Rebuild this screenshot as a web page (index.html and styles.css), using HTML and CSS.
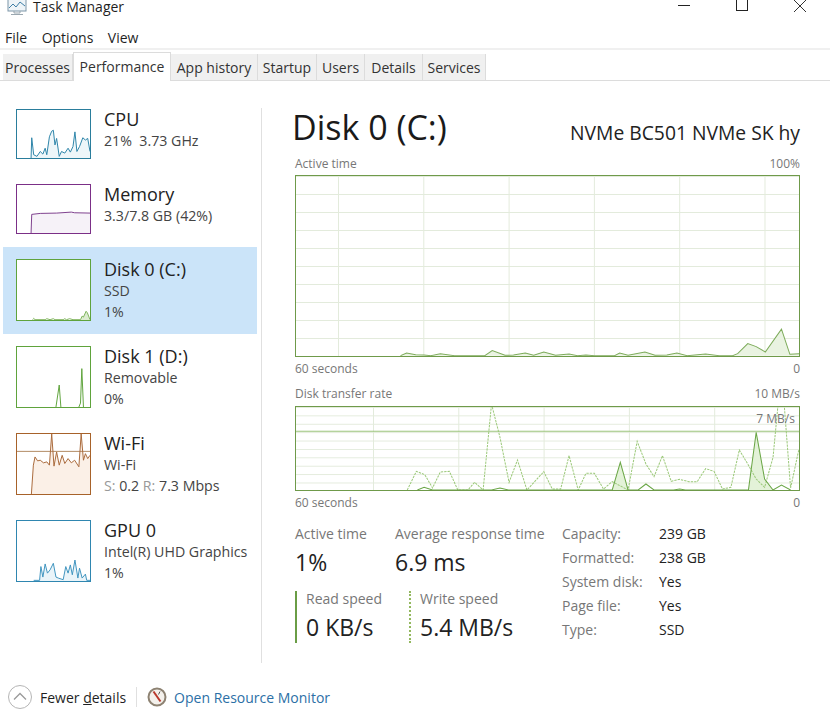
FILE: index.html
```html
<!DOCTYPE html>
<html>
<head>
	<meta charset="utf-8">
	<title>Task Manager</title>
	<link rel="stylesheet" href="styles.css">
</head>
<body>
	<div class="titlebar">
		<svg class="appIcon" width="22" height="16" viewBox="0 0 22 16">
			<rect x="2" y="-3" width="18" height="14" fill="#eef4f8" stroke="#7d96a8"/>
			<polyline points="3,8 7,4 10,7 14,2 19,6" fill="none" stroke="#3f7fa6"/>
			<path d="M8 11v2h6v-2M5 14.500h12" fill="none" stroke="#9aa7b0"/>
		</svg>
		<span class="appName">Task Manager</span>
		<div class="winBtns">
			<svg width="14" height="14" viewBox="0 0 14 14"><path d="M1 5.500h12" stroke="#222"/></svg>
			<svg width="14" height="14" viewBox="0 0 14 14"><rect x="1.500" y="-.500" width="11" height="11" fill="none" stroke="#222"/></svg>
			<svg width="14" height="14" viewBox="0 0 14 14"><path d="M1 0l12 12M13 0L1 12" stroke="#333"/></svg>
		</div>
	</div>
	<div class="menu">
		<span>File</span>
		<span>Options</span>
		<span>View</span>
	</div>
	<ul class="tabs">
		<li class="w70">Processes</li>
		<li class="on">Performance</li>
		<li class="w87">App history</li>
		<li class="w59">Startup</li>
		<li class="w48">Users</li>
		<li class="w58">Details</li>
		<li class="w63">Services</li>
	</ul>

	<div class="main">
		<div class="sidebar">
			<div class="item short">
				<div class="thumb cpu">
					<svg viewBox="49 43 223 147" preserveAspectRatio="none">
						<polygon fill="#eef6f9" points="92,190 94,128 100,180 110,185 120,170 128,178 135,160 140,180 148,125 155,108 160,105 165,150 170,130 178,185 185,170 195,175 205,160 212,172 220,155 226,110 232,170 240,155 250,128 258,135 265,130 272,170 272,190"/>
						<polyline fill="none" stroke="#2c84a8" stroke-width="3" points="92,190 94,128 100,180 110,185 120,170 128,178 135,160 140,180 148,125 155,108 160,105 165,150 170,130 178,185 185,170 195,175 205,160 212,172 220,155 226,110 232,170 240,155 250,128 258,135 265,130 272,170"/>
					</svg>
				</div>
				<div class="info">
					<div class="name">CPU</div>
					<div class="sub">21%&nbsp; 3.73 GHz</div>
				</div>
			</div>
			<div class="item short">
				<div class="thumb mem">
					<svg viewBox="49 268 223 147" preserveAspectRatio="none">
						<polygon fill="#f6f2f8" points="92,415 94,358 120,355 170,354 215,351 225,353 272,354 272,415"/>
						<polyline fill="none" stroke="#7d3f8d" stroke-width="3" points="92,415 94,358 120,355 170,354 215,351 225,353 272,354"/>
					</svg>
				</div>
				<div class="info">
					<div class="name">Memory</div>
					<div class="sub">3.3/7.8 GB (42%)</div>
				</div>
			</div>
			<div class="item sel">
				<div class="thumb disk">
					<svg viewBox="49 492 223 185" preserveAspectRatio="none">
						<polygon fill="#dcecd0" points="243,677 248,665 252,668 260,650 264,655 272,677"/>
						<polyline fill="none" stroke="#7db35a" stroke-width="3" points="97,676 100,672 104,676 135,676 140,673 150,676 160,673 165,676 190,676 195,673 200,676 210,673 220,676 243,676 248,665 252,668 260,650 264,655 272,676"/>
					</svg>
				</div>
				<div class="info">
					<div class="name">Disk 0 (C:)</div>
					<div class="sub">SSD</div>
					<div class="sub">1%</div>
				</div>
			</div>
			<div class="item">
				<div class="thumb disk">
					<svg viewBox="49 19 223 183" preserveAspectRatio="none">
						<polyline fill="none" stroke="#5fa33c" stroke-width="3" points="168,202 178,135 183,202"/>
						<polyline fill="none" stroke="#5fa33c" stroke-width="3" points="238,202 243,190 247,85 252,202"/>
					</svg>
				</div>
				<div class="info">
					<div class="name">Disk 1 (D:)</div>
					<div class="sub">Removable</div>
					<div class="sub">0%</div>
				</div>
			</div>
			<div class="item">
				<div class="thumb wifi">
					<svg viewBox="49 280 223 183" preserveAspectRatio="none">
						<polygon fill="#fbf0e7" points="93,463 99,375 104,350 112,362 120,360 130,368 140,365 148,375 155,280 162,378 170,335 178,375 187,345 195,370 205,355 215,368 225,360 238,380 245,280 252,360 258,340 265,355 272,345 272,463"/>
						<line x1="49" y1="333" x2="272" y2="333" stroke="#b08a62" stroke-width="3"/>
						<polyline fill="none" stroke="#a9693a" stroke-width="3" points="93,463 99,375 104,350 112,362 120,360 130,368 140,365 148,375 155,280 162,378 170,335 178,375 187,345 195,370 205,355 215,368 225,360 238,380 245,280 252,360 258,340 265,355 272,345"/>
					</svg>
				</div>
				<div class="info">
					<div class="name">Wi-Fi</div>
					<div class="sub">Wi-Fi</div>
					<div class="sub"><span class="dim">S:</span> 0.2 <span class="dim">R:</span> 7.3 Mbps</div>
				</div>
			</div>
			<div class="item">
				<div class="thumb gpu">
					<svg viewBox="49 541 223 183" preserveAspectRatio="none">
						<polygon fill="#eaf4f9" points="100,722 118,722 122,680 128,712 135,672 142,700 150,690 160,670 168,712 175,715 190,720 198,680 205,700 212,675 218,705 226,660 235,715 240,685 248,715 258,703 262,722 272,722 272,724 100,724"/>
						<polyline fill="none" stroke="#3f94bf" stroke-width="3" points="100,722 118,722 122,680 128,712 135,672 142,700 150,690 160,670 168,712 175,715 190,720 198,680 205,700 212,675 218,705 226,660 235,715 240,685 248,715 258,703 262,722 272,722"/>
					</svg>
				</div>
				<div class="info">
					<div class="name">GPU 0</div>
					<div class="sub">Intel(R) UHD Graphics</div>
					<div class="sub">1%</div>
				</div>
			</div>
		</div>
		<div class="divider"></div>

		<div class="detail">
			<div class="head">
				<h1>Disk 0 (C:)</h1>
				<div class="model">NVMe BC501 NVMe SK hy</div>
			</div>
			<div class="axis"><span>Active time</span><span>100%</span></div>
			<div class="chart big">
				<svg viewBox="30 -396 1492 536" preserveAspectRatio="none">
					<polygon fill="#e9f3e1" points="340,139 358,131 385,136 410,137 430,139 458,133 500,139 590,139 612,124 650,138 675,137 710,131 735,138 765,128 800,138 840,134 865,139 890,137 915,139 975,139 990,131 1015,138 1065,128 1095,138 1130,137 1160,131 1190,139 1245,134 1285,139 1325,139 1340,133 1370,103 1395,112 1422,128 1470,60 1495,135 1522,133 1522,139"/>
					<polyline fill="none" stroke="#7dab5a" stroke-width="3" points="340,139 358,131 385,136 410,137 430,139 458,133 500,139 590,139 612,124 650,138 675,137 710,131 735,138 765,128 800,138 840,134 865,139 890,137 915,139 975,139 990,131 1015,138 1065,128 1095,138 1130,137 1160,131 1190,139 1245,134 1285,139 1325,139 1340,133 1370,103 1395,112 1422,128 1470,60 1495,135 1522,133"/>
				</svg>
			</div>
			<div class="axis under"><span>60 seconds</span><span>0</span></div>
			<div class="axis second"><span>Disk transfer rate</span><span>10 MB/s</span></div>
			<div class="chart small">
				<svg viewBox="30 19 1492 249" preserveAspectRatio="none">
					<line x1="30" y1="92" x2="1522" y2="92" stroke="#9cc47c" stroke-width="3"/>
					<polygon fill="#e3f2d8" points="968,268 992,185 1015,268"/>
					<polygon fill="#e3f2d8" points="1360,268 1372,268 1395,95 1420,235 1445,268"/>
					<polyline fill="none" stroke="#9cc97a" stroke-width="3" stroke-dasharray="7 3" points="360,268 387,212 412,222 435,262 458,214 485,212 510,268 540,268 560,245 585,268 610,10 635,110 662,245 687,178 715,268 765,213 790,265 815,265 840,165 867,268 890,218 915,218 942,265 968,243 1015,268 1042,122 1068,190 1092,228 1117,165 1143,242 1168,236 1195,243 1220,243 1245,204 1270,212 1295,265 1320,260 1345,148 1370,190 1395,235 1420,260 1445,170 1460,10 1478,10 1497,262 1522,145"/>
					<polyline fill="none" stroke="#6aa646" stroke-width="3" points="390,268 410,260 435,268 610,268 635,262 660,268 968,268 992,185 1015,268 1045,268 1068,250 1092,268 1150,268 1168,265 1185,268 1360,268 1372,268 1395,95 1420,235 1445,268 1470,253 1497,268"/>
				</svg>
				<span class="limit">7 MB/s</span>
			</div>
			<div class="axis under"><span>60 seconds</span><span>0</span></div>

			<div class="stats">
				<div class="perf">
					<div class="perfRow">
						<div class="stat w100">
							<div class="label">Active time</div>
							<div class="value">1%</div>
						</div>
						<div class="stat">
							<div class="label">Average response time</div>
							<div class="value">6.9 ms</div>
						</div>
					</div>
					<div class="perfRow speeds">
						<div class="stat read">
							<div class="label">Read speed</div>
							<div class="value">0 KB/s</div>
						</div>
						<div class="stat write">
							<div class="label">Write speed</div>
							<div class="value">5.4 MB/s</div>
						</div>
					</div>
				</div>
				<div class="spec">
					<span class="label">Capacity:</span><span>239 GB</span>
					<span class="label">Formatted:</span><span>238 GB</span>
					<span class="label">System disk:</span><span>Yes</span>
					<span class="label">Page file:</span><span>Yes</span>
					<span class="label">Type:</span><span>SSD</span>
				</div>
			</div>
		</div>
	</div>

	<div class="footer">
		<svg width="24" height="24" viewBox="0 0 24 24">
			<circle cx="12" cy="12" r="11.500" fill="#fff" stroke="#b5b5b5"/>
			<path d="M6 14.500l6-6 6 6" fill="none" stroke="#9a9a9a" stroke-width="1.300"/>
		</svg>
		<span class="fewer">Fewer <u>d</u>etails</span>
		<span class="sep"></span>
		<svg width="20" height="20" viewBox="0 0 20 20">
			<circle cx="10" cy="10" r="8.500" fill="#f4f1ec" stroke="#8d8272" stroke-width="2"/>
			<path d="M6.500 4.500l7 10" stroke="#b8382c" stroke-width="2"/>
			<path d="M13 4.500l-1.500 3" stroke="#555"/>
		</svg>
		<span class="link">Open Resource Monitor</span>
	</div>
</body>
</html>
```

FILE: styles.css
```css
* {
	padding: 0px;
	margin: 0px;
	box-sizing: border-box;
}
html, body {
	height: 720px;
	overflow: hidden;
}
body {
	background: #fff;
	color: #1f1f1f;
	font-family: "Open Sans", "Noto Sans", sans-serif;
	font-size: 14px;
}
svg {
	display: block;
}

/* title bar */
.titlebar {
	display: flex;
	height: 16px;
	padding-left: 6px;
}
.appName {
	margin-left: 5px;
	font-size: 14px;
	line-height: 14px;
}
.winBtns {
	display: flex;
	gap: 44px;
	margin-left: auto;
	margin-right: 23px;
}

/* menu and tabs */
.menu {
	display: flex;
	gap: 14.500px;
	height: 34px;
	padding: 12px 0 0 5px;
	border-bottom: 2px solid #f0f0f0;
	line-height: 20px;
}
.tabs {
	display: flex;
	align-items: flex-end;
	height: 31px;
	padding-left: 3px;
	border-bottom: 1px solid #dcdcdc;
	list-style: none;
}
.tabs li {
	height: 26px;
	border-right: 1px solid #dcdcdc;
	background: #f0f0f0;
	color: #333;
	line-height: 28px;
	text-align: center;
}
.tabs li.on {
	position: relative;
	width: 98px;
	height: 29px;
	margin-bottom: -1px;
	border: 1px solid #dcdcdc;
	border-bottom: 0;
	background: #fff;
	line-height: 27px;
}
.w70 { width: 70px; }
.w87 { width: 87px; }
.w59 { width: 59px; }
.w48 { width: 48px; }
.w58 { width: 58px; }
.w63 { width: 63px; }

/* main area */
.main {
	display: flex;
	height: 599px;
}
.sidebar {
	width: 254px;
	margin-left: 3px;
	padding-top: 16px;
}
.item {
	display: flex;
	gap: 13px;
	height: 87px;
	padding: 12px 13px;
}
.item.short {
	height: 75px;
}
.item.sel {
	background: #cbe4f9;
}
.thumb {
	flex: none;
	width: 75px;
	height: 62px;
	border: 1px solid;
}
.short .thumb {
	height: 50px;
}
.thumb svg {
	width: 100%;
	height: 100%;
}
.cpu { border-color: #2a7d9c; }
.mem { border-color: #7b2f87; }
.disk { border-color: #5fa33c; background: #fff; }
.wifi { border-color: #a7622a; }
.gpu { border-color: #2f86b0; }
.info {
	margin-top: -2px;
	white-space: nowrap;
}
.name {
	font-size: 18px;
	line-height: 24px;
	color: #222;
}
.sub {
	font-size: 14.200px;
	line-height: 20.500px;
	color: #444;
}
.dim {
	color: #999;
}
.divider {
	width: 1px;
	margin: 27px 0 17px 4px;
	background: #e0e0e0;
}

/* detail pane */
.detail {
	width: 505px;
	margin-left: 33px;
	padding-top: 22px;
}
.head {
	display: flex;
	justify-content: space-between;
	align-items: baseline;
	height: 51px;
}
h1 {
	margin-left: -3px;
	font-size: 34px;
	font-weight: 400;
	line-height: 48px;
	color: #1a1a1a;
}
.model {
	font-size: 19.300px;
	color: #222;
}
.axis {
	display: flex;
	justify-content: space-between;
	height: 21px;
	font-size: 12px;
	line-height: 20px;
	color: #777;
}
.axis.under {
	height: 24px;
	line-height: 24px;
}
.axis.second {
	height: 25px;
	padding-top: 3px;
}
.chart {
	position: relative;
	border: 1px solid #6f9a4a;
	background-color: #fff;
}
.chart svg {
	width: 100%;
	height: 100%;
}
.chart.big {
	height: 182px;
	background-image: linear-gradient(#e3ebdc 1px, transparent 1px), linear-gradient(90deg, #e3ebdc 1px, transparent 1px);
	background-size: 100% 18px, 85.300px 100%;
	background-position: 0 0, 42px 0;
}
.chart.small {
	height: 85px;
	background-image: linear-gradient(#e3ebdc 1px, transparent 1px), linear-gradient(90deg, #e3ebdc 1px, transparent 1px);
	background-size: 100% 8.400px, 85.300px 100%;
	background-position: 0 0, 77px 0;
}
.limit {
	position: absolute;
	top: 4px;
	right: 4px;
	font-size: 12px;
	line-height: 16px;
	color: #777;
}

/* stats under the charts */
.stats {
	display: flex;
	margin-top: 9px;
}
.perf {
	width: 267px;
}
.perfRow {
	display: flex;
}
.label {
	color: #777;
}
.stat .label {
	font-size: 14px;
	line-height: 20px;
}
.value {
	font-size: 23px;
	line-height: 36px;
	color: #222;
}
.w100 {
	width: 100px;
}
.speeds {
	margin-top: 11px;
}
.speeds .stat .label {
	margin-top: -2px;
}
.read {
	width: 114px;
	height: 52px;
	padding-left: 9px;
	border-left: 2px solid #6a9d46;
}
.write {
	height: 52px;
	padding-left: 9px;
	border-left: 2px dotted #93b85f;
}
.spec {
	display: grid;
	grid-template-columns: 97px auto;
	grid-auto-rows: 24px;
	margin-top: -2px;
	font-size: 14px;
	line-height: 24px;
	color: #222;
}

/* footer */
.footer {
	display: flex;
	align-items: center;
	height: 34px;
	padding-left: 8px;
}
.fewer {
	margin-left: 8px;
}
.sep {
	width: 1px;
	height: 20px;
	margin: 0 10px;
	background: #e0e0e0;
}
.link {
	margin-left: 7px;
	color: #2c6fa6;
}
```
